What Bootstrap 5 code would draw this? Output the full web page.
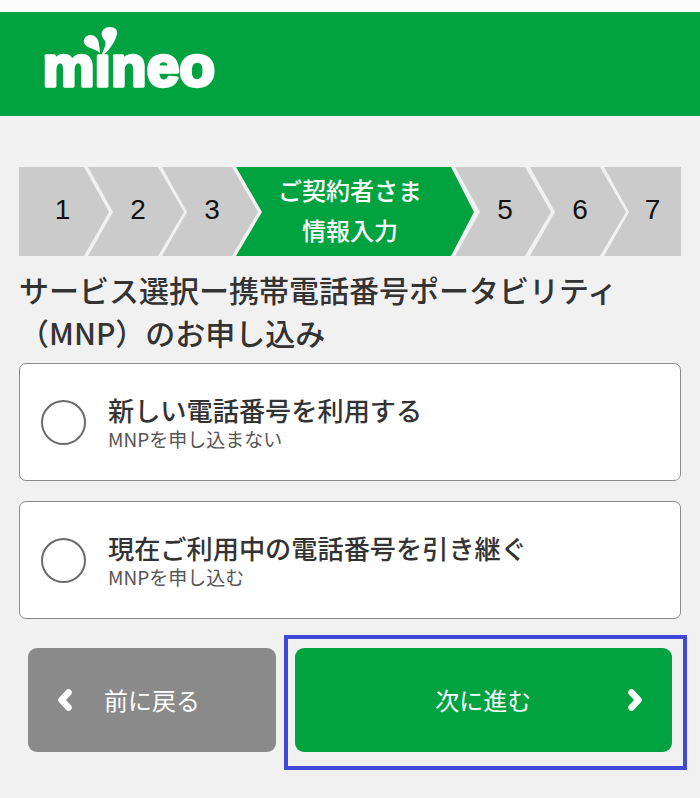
<!DOCTYPE html>
<html lang="ja">
<head>
<meta charset="utf-8">
<title>mineo</title>
<link href="https://cdn.jsdelivr.net/npm/bootstrap@5.3.0/dist/css/bootstrap.min.css" rel="stylesheet">
<style>
html,body{height:798px;overflow:hidden}
body{background:#f1f1f1;color:#333;font-family:"Noto Sans CJK JP","Liberation Sans",sans-serif}
.top-strip{height:12px;background:#fafafa}
.brand-bar{height:104px;background:#00a33f;padding:10px 0 0 44px}
.brand-logo{display:block;width:180px;height:80px;overflow:visible}
.brand-logo text{font-family:"Liberation Sans",sans-serif;font-weight:700;font-size:58px;fill:#fff;stroke:#fff;stroke-width:3.500px;stroke-linejoin:round}
.main-area{padding:51px 19px 0}
.stepper{height:89px;list-style:none;margin:0;padding:0}
.stp{height:89px;background:#cbcbcb;color:#111;font-family:"Liberation Sans",sans-serif;font-size:28px;display:flex;align-items:center;justify-content:center;flex:none;margin-left:-22px;width:96px;padding-left:4px;padding-bottom:4px;clip-path:polygon(0 0,70px 0,96px 45px,70px 89px,0 89px,25px 45px)}
.stp-first{width:90px;margin-left:0;padding-left:0;padding-right:3px;clip-path:polygon(0 0,65px 0,90px 45px,65px 89px,0 89px)}
.stp-first + .stp{margin-left:-21px}
.stp-now{width:238px;background:#00a33f;color:#fff;font-family:"Noto Sans CJK JP",sans-serif;font-size:24px;font-weight:500;line-height:40px;text-align:center;padding-left:0;padding-right:10px;clip-path:polygon(0 0,215px 0,238px 45px,215px 89px,0 89px,26px 45px)}
.stp-now + .stp{margin-left:-19px}
.stp-now + .stp + .stp{margin-left:-21px}
.stp-last{width:77px;padding-left:20px;clip-path:polygon(0 0,77px 0,77px 89px,0 89px,25px 45px)}
.page-title{font-size:30px;font-weight:500;line-height:43px;margin:12px 0 9px;color:#333;white-space:nowrap}
.opt-box{height:118px;background:#fff;border:1.5px solid #8a8a8a;border-radius:7px;padding-left:21px;margin-bottom:20px;gap:22px}
.opt-dot{width:45px;height:45px;border:2px solid #6b6b6b;border-radius:50%;flex:none}
.opt-text{padding-top:1px}
.opt-main{font-size:26.200px;font-weight:500;line-height:32px;color:#333}
.opt-sub{font-size:19px;line-height:26px;color:#555}
.act-row{margin-top:-4px;padding-left:9px}
.act-btn{height:104px;border-radius:9px;color:#fff;font-size:24px;line-height:1}
.act-back{width:248px;flex:none;background:#8a8a8a;margin-top:13px;padding-left:29px;gap:31px}
.act-frame{width:403px;flex:none;height:135px;border:4.500px solid #3f49d8;margin-left:8px;padding:8.500px 11px 0 6.500px}
.act-next{background:#00a33f;height:104px;position:relative}
.act-arrow{width:16px;height:24px;flex:none}
.act-next .act-arrow{position:absolute;right:29px;top:40px}
</style>
</head>
<body>
<div class="top-strip"></div>
<header class="brand-bar">
<svg class="brand-logo" viewBox="0 0 180 80" role="img" aria-label="mineo">
<text x="-1.500" y="63.500" textLength="172.500" lengthAdjust="spacingAndGlyphs">mineo</text>
<rect x="49" y="0" width="18" height="30" fill="#00a33f"/>
<path d="M58 33C59 28 62 24 61.500 20C60 17 56.500 14 58 10C59.500 6 63 5 66 5C71 5 74 8 73 12C72 17 69 22 66 26C64 29 61 32 58 33Z" fill="#fff"/>
<path d="M56 31C53 28 48 27 44 25C41 23 39 20.500 40 18C41 14.500 44 13 47 13C51 13 54 17 54.500 20C55 24 56 27 56 31Z" fill="#fff"/>
</svg>
</header>
<main class="main-area">
<ol class="stepper d-flex">
<li class="stp stp-first">1</li>
<li class="stp">2</li>
<li class="stp">3</li>
<li class="stp stp-now"><span>ご契約者さま<br>情報入力</span></li>
<li class="stp">5</li>
<li class="stp">6</li>
<li class="stp stp-last">7</li>
</ol>
<h1 class="page-title">サービス選択ー携帯電話番号ポータビリティ<br>（MNP）のお申し込み</h1>
<div class="opt-box d-flex align-items-center">
<span class="opt-dot"></span>
<div class="opt-text"><div class="opt-main">新しい電話番号を利用する</div><div class="opt-sub">MNPを申し込まない</div></div>
</div>
<div class="opt-box d-flex align-items-center">
<span class="opt-dot"></span>
<div class="opt-text"><div class="opt-main">現在ご利用中の電話番号を引き継ぐ</div><div class="opt-sub">MNPを申し込む</div></div>
</div>
<div class="act-row d-flex align-items-start">
<div class="act-btn act-back d-flex align-items-center">
<svg class="act-arrow" viewBox="0 0 16 24"><path d="M11.500 4.500 4.500 12l7 7.500" fill="none" stroke="#fff" stroke-width="6.500" stroke-linecap="round" stroke-linejoin="round"/></svg>
<span>前に戻る</span>
</div>
<div class="act-frame">
<div class="act-btn act-next d-flex align-items-center justify-content-center">
<span>次に進む</span>
<svg class="act-arrow" viewBox="0 0 16 24"><path d="M4.500 4.500 11.500 12l-7 7.500" fill="none" stroke="#fff" stroke-width="6.500" stroke-linecap="round" stroke-linejoin="round"/></svg>
</div>
</div>
</div>
</main>
<script src="https://cdn.jsdelivr.net/npm/bootstrap@5.3.0/dist/js/bootstrap.bundle.min.js"></script>
</body>
</html>
